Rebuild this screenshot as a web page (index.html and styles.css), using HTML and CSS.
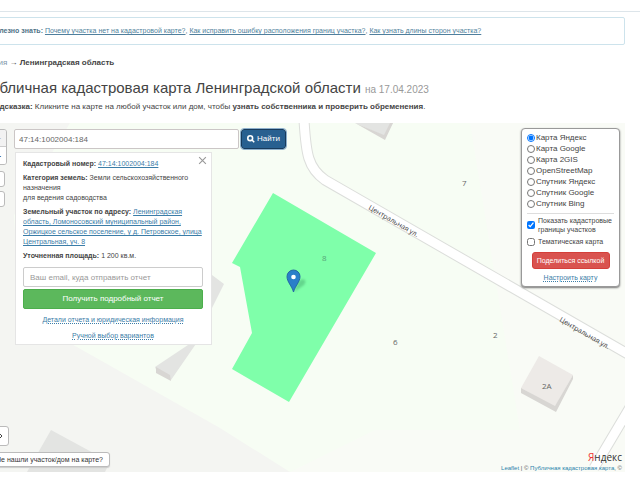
FILE: index.html
```
<!DOCTYPE html>
<html lang="ru">
<head>
<meta charset="utf-8">
<title>Публичная кадастровая карта Ленинградской области</title>
<link rel="stylesheet" href="styles.css">
</head>
<body>
<header class="topbar"></header>
<main class="page">
  <aside class="notice"><b>Полезно знать:</b> <a href="#">Почему участка нет на кадастровой карте?</a>, <a href="#">Как исправить ошибку расположения границ участка?</a>, <a href="#">Как узнать длины сторон участка?</a></aside>
  <nav class="crumbs"><a href="#">Россия</a> → <b>Ленинградская область</b></nav>
  <h1 class="title">Публичная кадастровая карта Ленинградской области <small>на 17.04.2023</small></h1>
  <p class="hint"><b>Подсказка:</b> Кликните на карте на любой участок или дом, чтобы <b>узнать собственника и проверить обременения</b>.</p>

  <section class="map">
    <svg class="map-canvas" viewBox="-19 123 644 349" preserveAspectRatio="xMaxYMin slice" aria-hidden="true">
      <rect class="ground" x="-19" y="123" width="644" height="349"/>
      <path class="ground-east" d="M470 123H625V472H290L375 430L520 430Z"/>
      <path class="ground-west" d="M-19 123H70L14 215L20 315L100 360L220 428L290 472H-19Z"/>
      <path class="house" d="M212 275L224 284L212 308Z"/>
      <path class="house" d="M170 330L188 345L155 367L157 372L171 380L200 338L203 330Z"/>
      <path class="house-side" d="M156 367L170 375L171 381L156 373Z"/>
      <path class="house" d="M51 430L110 462L105 472H27Z"/>
      <path class="house" d="M355 123L385 136L393 123Z"/>
      <path class="house-side" d="M355 123L384 135L390 123H393L385 140Z"/>
      <path class="road" d="M304 120C306 154 308 168 325 180L640 361"/>
      <path class="road-fill" d="M304 120C306 154 308 168 325 180L640 361"/>
      <path class="road" d="M632 404L594 468"/>
      <path class="road-fill" d="M632 404L594 468"/>
      <path class="house-top" d="M539 356L573 375L555 407L521 388Z"/>
      <path class="house-side" d="M521 388L555 406L573 375V379L556 412L521 393Z"/>
      <path class="parcel" d="M273 193L376 253L289 402L232 369L252 333L240 267L232 263Z"/>
      <text class="num" x="462" y="186">7</text>
      <text class="num" x="393" y="345">6</text>
      <text class="num" x="493" y="338">2</text>
      <text class="num" x="542" y="389">2А</text>
      <text class="num num-parcel" x="322" y="261">8</text>
      <text class="street" transform="translate(368 209) rotate(30)">Центральная ул.</text>
      <text class="street" transform="translate(559 321) rotate(30)">Центральная ул.</text>
      <path class="pin-shadow" d="M294 292L299 281C303 277 308 280 304 285Z"/>
      <path class="pin" d="M293.500 292C292 286 287 282 287 276.500A6.500 6.500 0 0 1 300 276.500C300 282 295 286 293.500 292Z"/>
      <circle cx="293.500" cy="277" r="2.300" fill="#fff"/>
    </svg>

    <div class="tools">
      <div class="zoom"><button type="button">+</button><button type="button">−</button></div>
      <button class="tool" type="button" aria-label="Слои"></button>
      <button class="tool" type="button" aria-label="Линейка"></button>
    </div>

    <div class="finder">
      <form class="search">
        <input class="search-input" type="text" value="47:14:1002004:184" aria-label="Кадастровый номер">
        <button class="search-button" type="button"><svg viewBox="0 0 10 10" aria-hidden="true"><circle cx="4" cy="4" r="3"/><path d="M6.300 6.300L9 9"/></svg>Найти</button>
      </form>
      <article class="card">
        <button class="close" type="button" aria-label="Закрыть"><svg viewBox="0 0 8 8" aria-hidden="true"><path d="M1 1L7 7M7 1L1 7"/></svg></button>
        <p><b>Кадастровый номер:</b> <a href="#">47:14:1002004:184</a></p>
        <p><b>Категория земель:</b> Земли сельскохозяйственного назначения<br>для ведения садоводства</p>
        <p><b>Земельный участок по адресу:</b> <a href="#">Ленинградская область, Ломоносовский муниципальный район, Оржицкое сельское поселение, у д. Петровское, улица Центральная, уч. 8</a></p>
        <p><b>Уточненная площадь:</b> 1 200 кв.м.</p>
        <input class="email" type="email" placeholder="Ваш email, куда отправить отчет" aria-label="Ваш email">
        <button class="report" type="button">Получить подробный отчет</button>
        <a class="more" href="#">Детали отчета и юридическая информация</a>
        <a class="more" href="#">Ручной выбор вариантов</a>
      </article>
    </div>

    <form class="layers">
      <label class="base"><input type="radio" name="base" checked>Карта Яндекс</label>
      <label class="base"><input type="radio" name="base">Карта Google</label>
      <label class="base"><input type="radio" name="base">Карта 2GIS</label>
      <label class="base"><input type="radio" name="base">OpenStreetMap</label>
      <label class="base"><input type="radio" name="base">Спутник Яндекс</label>
      <label class="base"><input type="radio" name="base">Спутник Google</label>
      <label class="base"><input type="radio" name="base">Спутник Bing</label>
      <div class="overlays">
        <label class="overlay"><input type="checkbox" checked><span>Показать кадастровые границы участков</span></label>
        <label class="overlay"><input type="checkbox"><span>Тематическая карта</span></label>
      </div>
      <button class="share" type="button">Поделиться ссылкой</button>
      <a class="setup" href="#">Настроить карту</a>
    </form>

    <div class="help">
      <button class="expand" type="button" aria-label="Развернуть"><svg viewBox="0 0 8 8" aria-hidden="true"><path d="M1 1L4 4L1 7M3 1L6 4L3 7"/></svg></button>
      <button class="missing" type="button">Не нашли участок/дом на карте?</button>
    </div>

    <footer class="credits">
      <div class="brand"><span>Я</span>ндекс</div>
      <div><a href="#">Leaflet</a> | © <a href="#">Публичная кадастровая карта</a>, ©</div>
    </footer>
  </section>
</main>
</body>
</html>
```
FILE: styles.css
```
* { box-sizing: border-box; }
body {
  margin: 0;
  background: #fff;
  color: #444;
  font: 7px/10px "Liberation Sans", Arial, sans-serif;
  overflow: hidden;
}
a { color: #3b7da8; text-decoration: underline; }
button, input { font: inherit; margin: 0; }
button { padding: 0; cursor: pointer; }
p { margin: 0; }

.topbar { height: 12px; border-bottom: 1px solid #dde5ea; }
/* The page is scrolled slightly to the right. */
.page { margin: 5px 15px 0 -19px; }

.notice {
  padding: 8px;
  border: 1px solid #cde3ec;
  border-radius: 2px;
  color: #4f7286;
}
.notice a { color: #4f7f9d; }
.crumbs { margin-top: 13px; color: #444; font-size: 8px; }
.crumbs a { color: #8296a8; text-decoration: none; }
.title { margin: 10px 0 0; font-size: 15px; line-height: 20px; font-weight: 400; color: #444; white-space: nowrap; }
.title small { font-size: 10px; color: #999; }
.hint { margin-top: 2px; padding-left: 8px; font-size: 8px; }

.map { position: relative; margin-top: 11px; min-height: 349px; overflow: hidden; }
.map-canvas { position: absolute; inset: 0; width: 100%; height: 100%; }
.ground { fill: #f7fdf4; }
.ground-east { fill: #f9fbf6; }
.ground-west { fill: #f4f5f2; }
.house { fill: #e3e4e2; }
.house-top { fill: #edeae7; }
.house-side { fill: #d8d6d3; }
.road { fill: none; stroke: #dcdedb; stroke-width: 11px; }
.road-fill { fill: none; stroke: #fff; stroke-width: 9px; }
.parcel { fill: #7fffaa; }
.num { font: 8px "Open Sans", sans-serif; fill: #666; }
.num-parcel { fill: #55a577; }
.street { font: 7px "Open Sans", sans-serif; fill: #444; }
.pin { fill: #2a7fc9; stroke: #2468a4; stroke-width: 1px; }
.pin-shadow { fill: #3c9a62; opacity: 0.4; filter: blur(1px); }

.tools { position: absolute; top: 6px; left: 8px; display: flex; flex-direction: column; align-items: flex-start; gap: 4px; }
.zoom { display: flex; flex-direction: column; width: 18px; border: 1px solid #bbb; border-radius: 3px; overflow: hidden; margin-bottom: 2px; }
.zoom button { height: 17px; border: 0; background: #fff; font-size: 11px; }
.zoom button:first-child { background: #f2f2f2; border-bottom: 1px solid #ccc; color: #bbb; }
.tool { width: 16px; height: 16px; border: 1px solid #bbb; border-radius: 3px; background: #fff; }

.finder { position: absolute; top: 6px; left: 33px; width: 272px; }
.search { display: flex; gap: 2px; }
.search-input { flex: 1; min-width: 0; height: 20px; padding: 0 4px; border: 1px solid #cbc6c6; border-radius: 2px; color: #666; font-size: 8px; background: #fff; }
.search-button { display: flex; align-items: center; justify-content: center; gap: 2px; width: 45px; height: 20px; border: 1px solid #183b5c; border-radius: 3px; background: #286090; color: #fff; font-size: 8px; outline: 1px solid #8eb0cc; outline-offset: 0; }
.search-button svg { width: 8px; height: 8px; fill: none; stroke: #fff; stroke-width: 2px; }

.card { position: relative; width: 197px; margin: 3px 0 0 1px; padding: 6px 8px 1px 7px; background: #fff; border: 1px solid #e5e5e5; }
.card p { margin-bottom: 4px; }
.close { position: absolute; top: 3px; right: 4px; width: 9px; height: 9px; border: 0; background: none; }
.close svg { display: block; fill: none; stroke: #999; stroke-width: 1px; }
.email { display: block; width: 100%; height: 20px; margin-top: 6px; padding: 0 6px; border: 1px solid #ccc; border-radius: 2px; font-size: 8px; }
.email::placeholder { color: #999; }
.report { display: block; width: 100%; height: 20px; margin: 2px 0 6px; border: 1px solid #4cae4c; border-radius: 2px; background: #5cb85c; color: #fff; font-size: 8px; }
.more { display: table; margin: 0 auto 6px; text-decoration: underline dotted; }
.more:last-child { margin-bottom: 2px; }

.layers { position: absolute; top: 5px; right: 5px; width: 99px; padding: 3px 5px 3px; background: #fff; border: 1px solid #999; border-radius: 4px; box-shadow: 0 1px 2px #777; }
.base { display: flex; align-items: center; height: 11px; font-size: 8px; line-height: 11px; white-space: nowrap; }
.base input { width: 8px; height: 8px; flex: none; margin-right: 1px; }
.overlays { margin-top: 4px; padding-top: 2px; border-top: 1px solid #ddd; display: grid; gap: 3px; }
.overlay { display: flex; align-items: center; gap: 3px; line-height: 9px; }
.overlay input { width: 8px; height: 8px; flex: none; }
.share { display: block; width: 78px; height: 17px; margin: 6px auto 4px; border: 1px solid #d43f3a; border-radius: 3px; background: #d9534f; color: #fff; }
.setup { display: table; margin: 0 auto; text-decoration: underline dotted; }

.help { position: absolute; left: 8px; bottom: 5px; display: flex; flex-direction: column; align-items: flex-start; gap: 6px; }
.expand { display: flex; align-items: center; justify-content: flex-end; width: 20px; height: 20px; padding-right: 4px; border: 1px solid #bbb; border-radius: 3px; background: #fff; }
.expand svg { width: 8px; height: 8px; fill: none; stroke: #444; stroke-width: 1px; }
.missing { height: 15px; padding: 0 6px; border: 1px solid #bbb; border-radius: 3px; background: #fff; color: #333; box-shadow: 0 1px 1px #ccc; white-space: nowrap; }

.credits { position: absolute; right: 3px; bottom: 0; text-align: right; font-size: 6px; line-height: 8px; color: #555; }
.credits a { color: #2b83ab; text-decoration: none; }
.brand { font: 10px/14px "Open Sans", sans-serif; color: #333; }
.brand span { color: #e33; }
```
